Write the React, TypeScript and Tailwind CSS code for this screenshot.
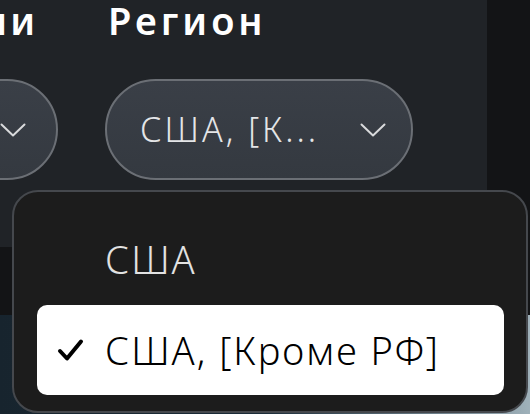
const font = { fontFamily: '"Noto Sans", "Open Sans", sans-serif' };

const Chevron = () => (
  <svg width="26" height="14" viewBox="0 0 26 14" fill="none" className="shrink-0">
    <path d="M1.5 1.5 L13 12.5 L24.5 1.5" stroke="#d9dadc" strokeWidth="2" strokeLinecap="round" strokeLinejoin="round" />
  </svg>
);

const Tick = () => (
  <svg width="27" height="24" viewBox="0 0 27 24" fill="none" className="shrink-0">
    <path d="M3 13 L10 20.5 L24 3.5" stroke="#000" strokeWidth="4" strokeLinecap="round" strokeLinejoin="round" />
  </svg>
);

const App = () => {
  return (
    <div
      className="relative w-[530px] h-[414px] overflow-hidden bg-[#131416] flex flex-col"
      style={font}
    >
      <div className="h-[247px] flex shrink-0">
        <div className="w-[487px] bg-[#202327] flex gap-[47px] pt-[8px]">
          <div className="-ml-[60px] w-[118px] flex flex-col shrink-0">
            <h2 className="text-[38px] font-semibold text-white leading-[38px] -mt-[7px] text-right pr-[20px] tracking-[3px]">
              ии
            </h2>
            <div className="mt-[40px] h-[101px] rounded-full border-2 border-[#6b6f75] bg-gradient-to-b from-[#3a3f47] to-[#343940] flex items-center justify-end pr-[30px]">
              <Chevron />
            </div>
          </div>
          <div className="flex flex-col shrink-0">
            <h2 className="text-[38px] font-semibold text-white leading-[38px] -mt-[7px] ml-[3px] tracking-[4px]">
              Регион
            </h2>
            <div className="mt-[40px] w-[308px] h-[101px] rounded-full border-2 border-[#6b6f75] bg-gradient-to-b from-[#3a3f47] to-[#343940] flex items-center justify-between pl-[33px] pr-[25px]">
              <span className="text-[34px] font-light text-[#e4e5e7] whitespace-nowrap tracking-[3px]">
                США, [К...
              </span>
              <Chevron />
            </div>
          </div>
        </div>
        <div className="flex-1" />
      </div>
      <div className="h-[68px] shrink-0 bg-[#131416]" />
      <div className="flex-1 bg-gradient-to-r from-[#17242e] via-[#1b2c38] to-[#9fb1ba]" />

      <div className="absolute left-[12px] top-[190px] w-[516px] h-[223px] rounded-[26px] border-2 border-[#45484d] bg-[#1c1c1c] pl-[23px] pr-[22px] pt-[30px]">
        <div className="h-[75px] flex items-center pl-[68px] text-[38px] font-light text-[#e2e2e2] tracking-[2px]">
          США
        </div>
        <div className="h-[90px] mt-[8px] rounded-[10px] bg-white flex items-center pl-[20px] gap-[21px] text-[38px] font-light text-black tracking-[2px]">
          <Tick />
          <span className="whitespace-nowrap">США, [Кроме РФ]</span>
        </div>
      </div>
    </div>
  );
};

export default App;
